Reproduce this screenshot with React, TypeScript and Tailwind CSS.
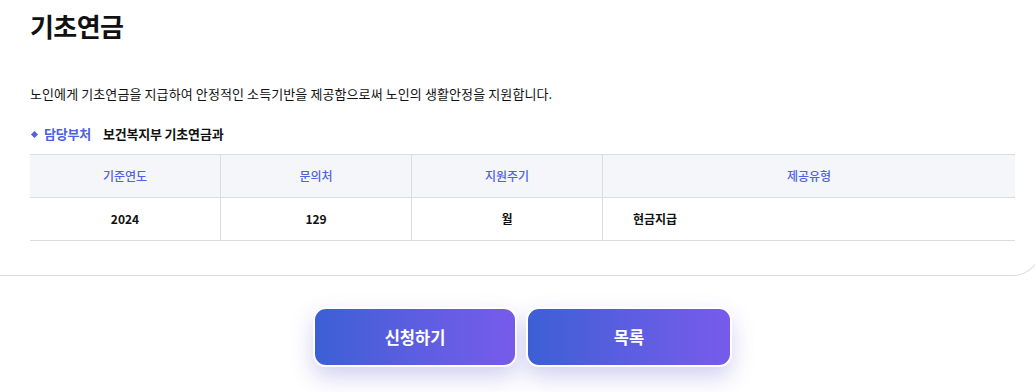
import React from 'react';

const cols = [
    { name: '기준연도', value: '2024', width: 'w-[190px]', center: true },
    { name: '문의처', value: '129', width: 'w-[191px]', center: true },
    { name: '지원주기', value: '월', width: 'w-[191px]', center: true },
    { name: '제공유형', value: '현금지급', width: 'flex-1', center: false },
];

export default function App() {
    return (
        <div
            className="w-[1035px] h-[392px] overflow-hidden bg-white text-[#111]"
            style={{ fontFamily: '"Noto Sans CJK KR", "Noto Sans", sans-serif' }}
        >
            <section className="w-[1041px] h-[276px] border-b border-r border-[#dcdcdc] rounded-br-[28px] pl-[30px] pr-[26px]">
                <h1 className="pt-[7px] text-[26px] font-bold leading-[38px] tracking-[-0.6px]">기초연금</h1>

                <p className="mt-[40px] text-[13px] leading-[18px] tracking-[0.1px]">
                    노인에게 기초연금을 지급하여 안정적인 소득기반을 제공함으로써 노인의 생활안정을 지원합니다.
                </p>

                <div className="mt-[22px] flex items-center text-[13px] font-bold leading-[18px] tracking-[-0.2px]">
                    <span className="ml-[2px] mr-[7px] w-[5px] h-[5px] rotate-45 bg-[#4d63e4]" />
                    <span className="text-[#4b5fe2]">담당부처</span>
                    <span className="ml-[12px] text-[#111]">보건복지부 기초연금과</span>
                </div>

                <div className="mt-[11px] w-[985px] border-t border-[#dcdcdc] text-[12px]">
                    <div className="flex h-[43px] bg-[#f5f6fa] border-b border-[#dcdcdc] font-medium">
                        {cols.map((c, i) => (
                            <div
                                key={c.name}
                                className={`${c.width} flex items-center justify-center text-[#4f62e0] ${i > 0 ? 'border-l border-[#dcdcdc]' : ''}`}
                            >
                                {c.name}
                            </div>
                        ))}
                    </div>
                    <div className="flex h-[43px] border-b border-[#dcdcdc] font-semibold">
                        {cols.map((c, i) => (
                            <div
                                key={c.name}
                                className={`${c.width} flex items-center ${c.center ? 'justify-center' : 'pl-[30px]'} ${i > 0 ? 'border-l border-[#dcdcdc]' : ''}`}
                            >
                                {c.value}
                            </div>
                        ))}
                    </div>
                </div>
            </section>

            <div className="flex justify-center gap-[9px] pt-[31px] pl-[10px]">
                <button className="w-[204px] h-[60px] rounded-[13px] border-2 border-white bg-gradient-to-r from-[#3b5fd6] to-[#775beb] text-white text-[16.5px] font-bold shadow-[0_10px_22px_rgba(110,100,210,0.3)]">
                    신청하기
                </button>
                <button className="w-[206px] h-[60px] rounded-[13px] border-2 border-white bg-gradient-to-r from-[#3b5fd6] to-[#775beb] text-white text-[16.5px] font-bold shadow-[0_10px_22px_rgba(110,100,210,0.3)]">
                    목록
                </button>
            </div>
        </div>
    );
}
